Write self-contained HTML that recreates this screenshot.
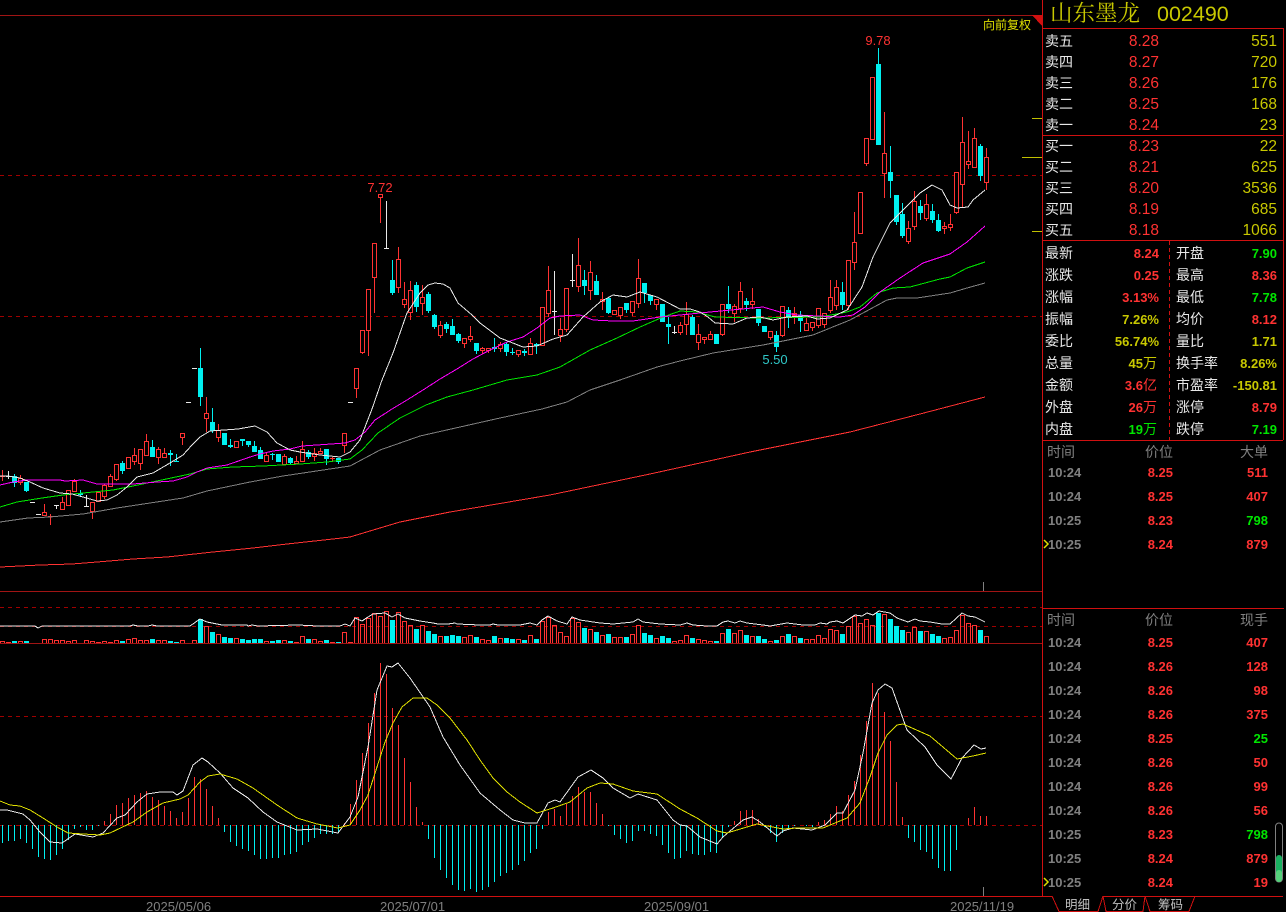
<!DOCTYPE html>
<html lang="zh">
<head>
<meta charset="utf-8">
<title>山东墨龙 002490</title>
<style>
html,body{margin:0;padding:0;background:#000;width:1286px;height:912px;overflow:hidden}
svg{display:block;position:absolute;left:0;top:0}
.d{font-family:"Liberation Sans",Arial,sans-serif}
.c{font-family:"Liberation Sans","WenQuanYi Zen Hei","Noto Sans CJK SC",sans-serif;font-size:14px}
.b{font-family:"Liberation Sans","WenQuanYi Zen Hei","Noto Sans CJK SC",sans-serif;font-size:13px;font-weight:bold}
.n{font-family:"Liberation Sans",Arial,sans-serif;font-size:15.5px}
.e{text-anchor:end}
.w{fill:#e8e8e8}.g{fill:#808080}.r{fill:#ff3232}.y{fill:#c8c800}.l{fill:#00e600}
.big{font-size:14px;font-weight:normal}
</style>
</head>
<body>
<svg width="1286" height="912" viewBox="0 0 1286 912" xmlns="http://www.w3.org/2000/svg">
<g shape-rendering="crispEdges" fill="none" stroke-width="1">
<path stroke="#a01414" d="M0 15.5H1042M0 591.5H1042M0 643.5H1042"/>
<path stroke="#a00000" stroke-dasharray="4 4" d="M0 175.5H1042M0 316.5H1042M0 607.5H1042M0 626.5H1042M0 716.5H1042M0 825.5H1042"/>
<path stroke="#c0c000" d="M1032 118.5H1042M1022 157.5H1042M1032 231.5H1042"/>
<path stroke="#808080" d="M983.5 582V591M983.5 887V896"/>

<!-- red wicks -->
<path stroke="#ff3232" d="M2.5 470V481M0 476.5H5M50.5 514V525M48 516.5H53M332.5 457V462M330 458.5H335M20.5 475V485M44.5 504V515M62.5 497V509M68.5 490V506M74.5 479V491M92.5 502V519M98.5 492V501M104.5 484V499M110.5 474V486M116.5 464V481M128.5 457V468M134.5 448V465M140.5 449V470M146.5 434V455M158.5 447V464M164.5 448V457M182.5 433V445M206.5 397V432M218.5 424V442M236.5 441V447M266.5 453V461M284.5 454V464M296.5 456V463M302.5 441V461M314.5 448V461M320.5 448V453M344.5 433V453M356.5 368V398M362.5 330V354M368.5 289V356M374.5 243V313M380.5 194V223M398.5 247V293M404.5 282V308M410.5 281V320M422.5 285V315M440.5 321V338M464.5 338V348M470.5 326V342M482.5 347V354M488.5 348V353M500.5 342V352M518.5 350V357M530.5 338V354M542.5 307V345M548.5 266V317M560.5 318V342M566.5 288V332M578.5 238V292M590.5 261V300M602.5 292V310M614.5 310V314M620.5 307V319M632.5 301V316M638.5 259V308M656.5 299V310M680.5 322V335M686.5 302V335M698.5 324V350M704.5 337V344M710.5 331V340M722.5 304V336M734.5 304V322M740.5 282V313M752.5 288V309M770.5 331V340M782.5 306V337M794.5 307V324M806.5 318V330M812.5 322V331M818.5 308V328M824.5 313V328M830.5 280V313M836.5 280V310M848.5 260V310M854.5 212V270M860.5 192V234M866.5 138V166M872.5 77V139M884.5 112V198M908.5 221V244M914.5 191V230M926.5 194V221M944.5 222V234M950.5 214V231M956.5 172V214M962.5 117V208M968.5 131V169M974.5 128V167M986.5 148V190"/>
<!-- red bodies -->
<path stroke="#ff3232" fill="#000" d="M18.5 478.5h4v4h-4zM42.5 512.5h4v3h-4zM60.5 502.5h4v7h-4zM66.5 490.5h4v15h-4zM72.5 481.5h4v10h-4zM90.5 502.5h4v9h-4zM96.5 492.5h4v9h-4zM102.5 485.5h4v11h-4zM108.5 476.5h4v10h-4zM114.5 464.5h4v15h-4zM126.5 457.5h4v11h-4zM132.5 455.5h4v6h-4zM138.5 449.5h4v14h-4zM144.5 441.5h4v14h-4zM156.5 449.5h4v8h-4zM162.5 453.5h4v4h-4zM180.5 433.5h4v4h-4zM204.5 413.5h4v5h-4zM216.5 430.5h4v7h-4zM234.5 441.5h4v6h-4zM264.5 455.5h4v6h-4zM282.5 456.5h4v8h-4zM294.5 461.5h4v2h-4zM300.5 449.5h4v12h-4zM312.5 453.5h4v3h-4zM318.5 451.5h4v2h-4zM342.5 433.5h4v12h-4zM354.5 368.5h4v20h-4zM360.5 330.5h4v22h-4zM366.5 289.5h4v41h-4zM372.5 243.5h4v34h-4zM378.5 194.5h4v3h-4zM396.5 259.5h4v28h-4zM402.5 299.5h4v5h-4zM408.5 290.5h4v22h-4zM420.5 297.5h4v6h-4zM438.5 325.5h4v10h-4zM462.5 338.5h4v5h-4zM468.5 336.5h4v3h-4zM480.5 348.5h4v2h-4zM486.5 348.5h4v2h-4zM498.5 344.5h4v4h-4zM516.5 350.5h4v4h-4zM528.5 343.5h4v11h-4zM540.5 307.5h4v38h-4zM546.5 290.5h4v23h-4zM558.5 329.5h4v6h-4zM564.5 288.5h4v41h-4zM576.5 265.5h4v21h-4zM588.5 272.5h4v18h-4zM600.5 299.5h4v2h-4zM612.5 310.5h4v4h-4zM618.5 307.5h4v8h-4zM630.5 301.5h4v11h-4zM636.5 278.5h4v25h-4zM654.5 299.5h4v5h-4zM678.5 325.5h4v7h-4zM684.5 314.5h4v10h-4zM696.5 334.5h4v8h-4zM702.5 337.5h4v2h-4zM708.5 334.5h4v5h-4zM720.5 304.5h4v30h-4zM732.5 306.5h4v7h-4zM738.5 291.5h4v17h-4zM750.5 301.5h4v3h-4zM768.5 331.5h4v6h-4zM780.5 306.5h4v29h-4zM792.5 313.5h4v2h-4zM804.5 323.5h4v7h-4zM810.5 322.5h4v5h-4zM816.5 308.5h4v17h-4zM822.5 313.5h4v11h-4zM828.5 297.5h4v13h-4zM834.5 287.5h4v18h-4zM846.5 260.5h4v45h-4zM852.5 242.5h4v20h-4zM858.5 192.5h4v41h-4zM864.5 138.5h4v25h-4zM870.5 77.5h4v62h-4zM882.5 153.5h4v20h-4zM906.5 228.5h4v13h-4zM912.5 201.5h4v25h-4zM924.5 204.5h4v14h-4zM942.5 226.5h4v2h-4zM948.5 224.5h4v3h-4zM954.5 172.5h4v40h-4zM960.5 142.5h4v42h-4zM966.5 161.5h4v3h-4zM972.5 138.5h4v29h-4zM984.5 157.5h4v25h-4z"/>
<!-- cyan wicks -->
<path stroke="#00f0f0" d="M14.5 474V487M26.5 482V492M80.5 490V496M122.5 461V474M152.5 440V457M170.5 450V466M176.5 454V462M200.5 348V406M212.5 408V433M224.5 433V445M230.5 439V448M242.5 439V446M248.5 441V447M254.5 441V452M260.5 447V459M272.5 453V460M278.5 454V462M290.5 457V464M308.5 450V459M326.5 449V465M338.5 458V464M392.5 260V295M416.5 282V312M428.5 292V313M434.5 314V329M446.5 322V333M452.5 319V335M458.5 333V343M476.5 343V354M494.5 338V352M506.5 342V356M512.5 348V355M524.5 349V356M536.5 343V354M584.5 270V295M596.5 275V295M608.5 298V314M626.5 303V313M644.5 283V303M650.5 295V305M662.5 304V322M668.5 317V344M692.5 315V335M716.5 334V344M728.5 286V313M746.5 298V311M758.5 309V326M764.5 326V332M776.5 331V352M788.5 307V328M800.5 311V332M842.5 282V310M878.5 48V145M890.5 146V198M896.5 195V225M902.5 203V238M920.5 200V220M932.5 204V223M938.5 214V232M980.5 144V181"/>
<!-- cyan bodies -->
<path stroke="none" fill="#00f0f0" d="M12 476h5v7h-5zM24 482h5v9h-5zM78 493h5v2h-5zM120 463h5v8h-5zM150 447h5v10h-5zM168 453h5v2h-5zM174 461h5v1h-5zM198 368h5v29h-5zM210 422h5v9h-5zM222 433h5v12h-5zM228 445h5v2h-5zM240 439h5v2h-5zM246 441h5v4h-5zM252 446h5v6h-5zM258 450h5v9h-5zM270 454h5v1h-5zM276 454h5v8h-5zM288 458h5v5h-5zM306 452h5v5h-5zM324 449h5v10h-5zM336 458h5v4h-5zM390 280h5v13h-5zM414 285h5v22h-5zM426 294h5v17h-5zM432 315h5v12h-5zM444 324h5v5h-5zM450 326h5v9h-5zM456 334h5v7h-5zM474 343h5v8h-5zM492 347h5v2h-5zM504 344h5v8h-5zM510 352h5v1h-5zM522 351h5v2h-5zM534 344h5v2h-5zM582 280h5v6h-5zM594 281h5v14h-5zM606 298h5v15h-5zM624 303h5v7h-5zM642 283h5v10h-5zM648 295h5v6h-5zM660 304h5v18h-5zM666 324h5v3h-5zM690 317h5v18h-5zM714 334h5v10h-5zM726 304h5v5h-5zM744 301h5v4h-5zM756 309h5v14h-5zM762 326h5v6h-5zM774 335h5v12h-5zM786 310h5v7h-5zM798 315h5v6h-5zM840 292h5v13h-5zM876 64h5v81h-5zM888 172h5v9h-5zM894 195h5v27h-5zM900 214h5v22h-5zM918 206h5v7h-5zM930 211h5v9h-5zM936 220h5v11h-5zM978 146h5v30h-5z"/>
<!-- white doji -->
<path stroke="#e8e8e8" d="M8.5 471V479M6 476.5H11M30 502.5H35M36 514.5H41M54 505.5H59M56.5 505V509M84 506.5H89M86.5 495V507M186 402.5H191M192 368.5H197M348 402.5H353M384 248.5H389M386.5 201V248M552 311.5H557M554.5 271V335M570 280.5H575M572.5 254V287M672 332.5H677M674.5 326V334"/>

<!-- moving averages -->
<polyline stroke="#ff3232" points="0,567 40,565 72,564 97,562 133,559 167,557 213,552 253,548 287,544 333,539 350,537 400,522 450,512 550,495 650,474 750,452 850,432 920,414 985,397"/>
<polyline stroke="#808080" points="0,522 28,518 50,517 83,514 117,508 150,503 183,498 207,491 250,482 283,476 350,466 380,450 420,436 500,418 542,409 567,402 590,390 620,380 657,367 680,361 713,353 763,345 813,335 850,320 863,313 887,300 897,298 917,298 950,293 967,288 985,283"/>
<polyline stroke="#00e600" points="0,507 17,502 42,498 63,495 93,492 113,490 133,486 157,481 190,474 207,469 233,467 263,466 300,464 327,462 350,459 362,450 378,433 400,418 426,405 447,397 473,390 507,380 537,375 560,367 590,350 617,338 640,327 663,317 680,311 697,312 715,317 757,318 820,317 847,312 860,307 877,293 893,288 910,287 940,279 950,277 967,268 985,262"/>
<polyline stroke="#ff00ff" points="0,485 13,482 27,480 60,480 65,481 83,480 97,484 133,484 157,482 173,481 187,477 197,472 207,468 227,465 250,457 260,454 273,451 290,449 302,446 317,445 345,443 355,440 365,432 375,420 392,409 407,400 423,390 440,379 457,369 473,359 490,350 507,342 523,337 537,328 550,318 560,316 580,315 593,320 613,321 633,321 660,317 680,315 710,312 763,307 780,312 797,315 840,317 853,315 865,307 880,292 900,278 923,263 950,254 967,242 985,226"/>
<polyline stroke="#e8e8e8" points="0,476 8,476 20,478 30,482 43,488 60,493 72,494 83,497 97,501 107,500 117,495 127,487 137,477 153,473 170,463 183,455 192,445 200,437 210,431 238,429 255,426 267,432 277,443 290,450 300,452 320,455 340,457 350,452 360,440 372,409 382,380 393,353 407,313 420,293 428,285 435,283 443,284 450,288 458,303 472,315 480,323 500,338 523,347 537,346 553,339 567,335 583,317 600,302 613,295 627,297 640,292 657,297 680,309 690,309 700,312 708,317 715,323 733,324 747,318 760,317 773,320 787,317 807,316 817,319 830,318 847,310 862,287 873,257 890,223 910,203 920,193 932,185 942,190 950,205 957,208 968,207 973,200 985,190"/>

<!-- volume -->
<path stroke="#ff3232" d="M0.5 643V641.5h4V643M6.5 643V642.5h4V643M18.5 643V641.5h4V643M42.5 643V639.5h4V643M48.5 643V639.5h4V643M54.5 643V640.5h4V643M60.5 643V640.5h4V643M66.5 643V641.5h4V643M72.5 643V640.5h4V643M84.5 643V640.5h4V643M90.5 643V641.5h4V643M96.5 643V642.5h4V643M102.5 643V641.5h4V643M108.5 643V642.5h4V643M114.5 643V640.5h4V643M126.5 643V639.5h4V643M132.5 643V638.5h4V643M138.5 643V640.5h4V643M144.5 643V640.5h4V643M156.5 643V640.5h4V643M162.5 643V640.5h4V643M180.5 643V640.5h4V643M192.5 643V640.5h4V643M204.5 643V626.5h4V643M216.5 643V634.5h4V643M234.5 643V638.5h4V643M264.5 643V641.5h4V643M282.5 643V640.5h4V643M294.5 643V642.5h4V643M300.5 643V636.5h4V643M312.5 643V639.5h4V643M318.5 643V641.5h4V643M330.5 643V642.5h4V643M342.5 643V632.5h4V643M348.5 643V642.5h4V643M354.5 643V617.5h4V643M360.5 643V624.5h4V643M366.5 643V618.5h4V643M372.5 643V613.5h4V643M378.5 643V616.5h4V643M384.5 643V611.5h4V643M396.5 643V612.5h4V643M402.5 643V621.5h4V643M408.5 643V625.5h4V643M420.5 643V625.5h4V643M438.5 643V636.5h4V643M462.5 643V637.5h4V643M468.5 643V635.5h4V643M480.5 643V639.5h4V643M486.5 643V640.5h4V643M498.5 643V638.5h4V643M516.5 643V639.5h4V643M528.5 643V635.5h4V643M540.5 643V621.5h4V643M546.5 643V617.5h4V643M552.5 643V625.5h4V643M558.5 643V632.5h4V643M564.5 643V636.5h4V643M570.5 643V618.5h4V643M576.5 643V622.5h4V643M588.5 643V629.5h4V643M600.5 643V635.5h4V643M612.5 643V637.5h4V643M618.5 643V637.5h4V643M630.5 643V634.5h4V643M636.5 643V625.5h4V643M654.5 643V638.5h4V643M672.5 643V641.5h4V643M678.5 643V640.5h4V643M684.5 643V635.5h4V643M696.5 643V639.5h4V643M702.5 643V640.5h4V643M708.5 643V641.5h4V643M720.5 643V633.5h4V643M732.5 643V633.5h4V643M738.5 643V630.5h4V643M750.5 643V636.5h4V643M768.5 643V641.5h4V643M780.5 643V636.5h4V643M792.5 643V636.5h4V643M804.5 643V639.5h4V643M810.5 643V639.5h4V643M816.5 643V635.5h4V643M822.5 643V638.5h4V643M828.5 643V629.5h4V643M834.5 643V630.5h4V643M846.5 643V626.5h4V643M852.5 643V616.5h4V643M858.5 643V623.5h4V643M864.5 643V619.5h4V643M870.5 643V625.5h4V643M882.5 643V614.5h4V643M906.5 643V632.5h4V643M912.5 643V627.5h4V643M924.5 643V631.5h4V643M942.5 643V638.5h4V643M948.5 643V637.5h4V643M954.5 643V630.5h4V643M960.5 643V615.5h4V643M966.5 643V623.5h4V643M972.5 643V625.5h4V643M984.5 643V636.5h4V643"/>
<path stroke="none" fill="#00f0f0" d="M12 641h5v2h-5zM24 641h5v2h-5zM120 641h5v2h-5zM150 639h5v4h-5zM168 641h5v2h-5zM174 642h5v1h-5zM198 619h5v24h-5zM210 632h5v11h-5zM222 637h5v6h-5zM228 638h5v5h-5zM240 639h5v4h-5zM246 640h5v3h-5zM252 639h5v4h-5zM258 639h5v4h-5zM270 641h5v2h-5zM276 640h5v3h-5zM288 641h5v2h-5zM306 639h5v4h-5zM324 640h5v3h-5zM336 642h5v1h-5zM390 620h5v23h-5zM414 629h5v14h-5zM426 631h5v12h-5zM432 634h5v9h-5zM444 636h5v7h-5zM450 635h5v8h-5zM456 636h5v7h-5zM474 637h5v6h-5zM492 636h5v7h-5zM504 638h5v5h-5zM510 639h5v4h-5zM522 640h5v3h-5zM534 639h5v4h-5zM582 628h5v15h-5zM594 632h5v11h-5zM606 634h5v9h-5zM624 637h5v6h-5zM642 633h5v10h-5zM648 635h5v8h-5zM660 636h5v7h-5zM666 638h5v5h-5zM690 638h5v5h-5zM714 641h5v2h-5zM726 629h5v14h-5zM744 635h5v8h-5zM756 636h5v7h-5zM762 639h5v4h-5zM774 640h5v3h-5zM786 634h5v9h-5zM798 638h5v5h-5zM840 634h5v9h-5zM876 613h5v30h-5zM888 619h5v24h-5zM894 626h5v17h-5zM900 630h5v13h-5zM918 631h5v12h-5zM930 634h5v9h-5zM936 636h5v7h-5zM978 630h5v13h-5z"/>
<polyline stroke="#e8e8e8" points="0,626 35,626 38,628 42,626 130,626 133,625 138,626 148,626 152,625 157,626 190,626 200,619 207,622 217,624 222,625 247,625 248,626 252,625 258,626 298,625 318,626 340,626 345,624 350,626 355,618 362,621 368,617 373,614 385,613 392,617 398,614 405,618 420,621 433,623 438,624 448,624 455,623 457,624 480,625 490,625 493,624 498,625 520,625 530,623 537,625 542,620 548,616 557,621 567,624 572,617 580,620 600,623 613,624 633,622 638,619 643,622 660,624 680,625 687,623 693,625 707,626 717,626 723,622 728,621 735,623 740,621 747,623 763,625 770,626 787,623 803,625 815,625 820,623 827,624 830,622 837,621 843,623 855,615 862,616 867,613 873,615 879,611 890,613 897,618 908,622 915,619 920,621 930,622 942,624 950,624 962,613 968,616 975,617 985,622"/>

<!-- MACD bars -->
<path stroke="#00f0f0" d="M2.5 825V843M8.5 825V841M14.5 825V841M20.5 825V839M26.5 825V843M32.5 825V849M38.5 825V857M44.5 825V859M50.5 825V860M56.5 825V855M62.5 825V849M68.5 825V840M74.5 825V829M80.5 825V827M86.5 825V830M92.5 825V830M98.5 825V826M224.5 825V832M230.5 825V842M236.5 825V846M242.5 825V849M248.5 825V851M254.5 825V855M260.5 825V859M266.5 825V859M272.5 825V858M278.5 825V858M284.5 825V855M290.5 825V854M296.5 825V852M302.5 825V845M308.5 825V842M314.5 825V838M320.5 825V834M326.5 825V834M332.5 825V834M338.5 825V833M428.5 825V839M434.5 825V858M440.5 825V870M446.5 825V878M452.5 825V885M458.5 825V890M464.5 825V891M470.5 825V889M476.5 825V892M482.5 825V890M488.5 825V887M494.5 825V882M500.5 825V876M506.5 825V873M512.5 825V870M518.5 825V865M524.5 825V861M530.5 825V853M536.5 825V849M542.5 825V829M608.5 825V826M614.5 825V835M620.5 825V839M626.5 825V843M632.5 825V841M638.5 825V831M644.5 825V831M650.5 825V834M656.5 825V836M662.5 825V845M668.5 825V853M674.5 825V859M680.5 825V858M686.5 825V851M692.5 825V854M698.5 825V855M704.5 825V855M710.5 825V852M716.5 825V853M722.5 825V837M728.5 825V827M764.5 825V827M770.5 825V833M776.5 825V842M782.5 825V833M788.5 825V828M794.5 825V826M806.5 825V826M812.5 825V827M908.5 825V838M914.5 825V842M920.5 825V850M926.5 825V852M932.5 825V859M938.5 825V868M944.5 825V871M950.5 825V871M956.5 825V850"/>
<path stroke="#ff3232" d="M104.5 825V821M110.5 825V814M116.5 825V805M122.5 825V803M128.5 825V798M134.5 825V795M140.5 825V793M146.5 825V791M152.5 825V797M158.5 825V800M164.5 825V806M170.5 825V811M176.5 825V818M182.5 825V812M188.5 825V798M194.5 825V777M200.5 825V779M206.5 825V789M212.5 825V806M218.5 825V818M344.5 825V823M350.5 825V804M356.5 825V780M362.5 825V753M368.5 825V723M374.5 825V693M380.5 825V663M386.5 825V674M392.5 825V708M398.5 825V725M404.5 825V758M410.5 825V782M416.5 825V807M422.5 825V822M548.5 825V812M554.5 825V809M560.5 825V816M566.5 825V804M572.5 825V796M578.5 825V787M584.5 825V792M590.5 825V792M596.5 825V803M602.5 825V814M734.5 825V821M740.5 825V811M746.5 825V810M752.5 825V810M758.5 825V819M818.5 825V822M824.5 825V820M830.5 825V814M836.5 825V806M842.5 825V811M848.5 825V795M854.5 825V781M860.5 825V755M866.5 825V721M872.5 825V683M878.5 825V693M884.5 825V712M890.5 825V741M896.5 825V782M902.5 825V817M968.5 825V818M974.5 825V807M980.5 825V816M986.5 825V816"/>
<polyline stroke="#e8e8e8" points="0,810 7,810 23,814 30,820 40,832 50,842 62,843 75,834 93,837 103,833 117,818 125,815 137,802 147,794 160,792 173,792 177,795 183,791 193,765 202,758 208,762 220,773 233,788 248,798 263,812 277,822 297,830 317,829 338,833 350,817 358,797 368,747 377,690 387,666 392,667 398,663 410,678 430,707 443,737 460,765 480,793 500,810 513,820 525,823 537,823 548,803 555,800 560,802 578,777 591,770 603,778 613,788 630,798 638,794 657,800 673,820 680,825 687,826 700,837 717,844 723,837 743,820 752,817 760,822 777,836 783,831 793,828 812,830 825,825 837,813 843,813 855,790 863,753 872,703 878,690 885,684 892,688 907,730 925,747 937,765 951,779 962,758 974,745 981,749 986,748"/>
<polyline stroke="#e0e000" points="0,801 10,805 20,806 30,810 43,818 57,827 68,833 83,834 100,835 110,833 133,822 147,812 163,803 180,799 188,795 200,782 208,776 220,774 237,779 253,788 277,805 297,818 317,824 338,828 350,825 360,810 368,795 377,767 385,742 393,723 402,707 413,698 427,698 437,705 450,718 467,740 480,760 493,778 507,792 520,802 537,813 553,808 570,802 587,788 600,783 613,784 633,791 657,794 680,809 697,818 717,831 727,833 757,824 783,829 797,828 823,828 847,818 860,803 870,777 878,753 887,735 897,725 903,724 930,736 957,759 973,756 986,753"/>

<!-- panel frames -->
<path stroke="#d01010" d="M1042.5 0V896M0 896.5H1052M1103 896.5H1283M1042 28.5H1283M1042 135.5H1283M1042 240.5H1283M1042 440.5H1283M1042 608.5H1284M1283.5 28V440"/>
<path stroke="#d01010" stroke-dasharray="4 3" d="M1169.5 241V440"/>
<path stroke="#d01010" d="M1052 896L1059 911.5H1098L1103 896M1103 896L1106 911.5H1143L1145 896M1145 896L1150 911.5H1189L1195 896"/>
<path fill="#d01010" stroke="none" d="M1032 15H1042V26z"/>
</g>

<!-- scrollbar -->
<rect x="1275.5" y="823" width="7" height="59" rx="3.5" fill="#000" stroke="#808080"/>
<rect x="1276" y="855" width="6" height="27" rx="3" fill="#19b060"/>
<rect x="1276" y="870" width="6" height="12" rx="3" fill="#55d07a"/>

<!-- chart labels -->
<text class="d r" x="380" y="192" font-size="13" text-anchor="middle">7.72</text>
<text class="d r" x="878" y="45" font-size="13" text-anchor="middle">9.78</text>
<text class="d" x="775" y="364" font-size="13" text-anchor="middle" fill="#30c8c8">5.50</text>
<text class="c" x="983" y="29" style="font-size:12px" fill="#e0e000">向前复权</text>
<text class="d g" x="146" y="911" font-size="13">2025/05/06</text>
<text class="d g" x="380" y="911" font-size="13">2025/07/01</text>
<text class="d g" x="644" y="911" font-size="13">2025/09/01</text>
<text class="d g" x="950" y="911" font-size="13">2025/11/19</text>

<!-- title -->
<text x="1050" y="21" font-family="'Noto Serif CJK SC','Liberation Serif',serif" font-size="22.5" fill="#c8c800">山东墨龙</text>
<text class="d" x="1157" y="21" font-size="21.5" fill="#c8c800">002490</text>

<!-- order book -->
<g class="c w">
<text x="1045" y="46">卖五</text><text x="1045" y="67">卖四</text><text x="1045" y="88">卖三</text><text x="1045" y="109">卖二</text><text x="1045" y="130">卖一</text>
<text x="1045" y="151">买一</text><text x="1045" y="172">买二</text><text x="1045" y="193">买三</text><text x="1045" y="214">买四</text><text x="1045" y="235">买五</text>
</g>
<g class="n r e">
<text x="1159" y="46">8.28</text><text x="1159" y="67">8.27</text><text x="1159" y="88">8.26</text><text x="1159" y="109">8.25</text><text x="1159" y="130">8.24</text>
<text x="1159" y="151">8.23</text><text x="1159" y="172">8.21</text><text x="1159" y="193">8.20</text><text x="1159" y="214">8.19</text><text x="1159" y="235">8.18</text>
</g>
<g class="n y e">
<text x="1277" y="46">551</text><text x="1277" y="67">720</text><text x="1277" y="88">176</text><text x="1277" y="109">168</text><text x="1277" y="130">23</text>
<text x="1277" y="151">22</text><text x="1277" y="172">625</text><text x="1277" y="193">3536</text><text x="1277" y="214">685</text><text x="1277" y="235">1066</text>
</g>

<!-- stats -->
<g class="c w">
<text x="1045" y="258">最新</text><text x="1045" y="280">涨跌</text><text x="1045" y="302">涨幅</text><text x="1045" y="324">振幅</text><text x="1045" y="346">委比</text><text x="1045" y="368">总量</text><text x="1045" y="390">金额</text><text x="1045" y="412">外盘</text><text x="1045" y="434">内盘</text>
<text x="1176" y="258">开盘</text><text x="1176" y="280">最高</text><text x="1176" y="302">最低</text><text x="1176" y="324">均价</text><text x="1176" y="346">量比</text><text x="1176" y="368">换手率</text><text x="1176" y="390">市盈率</text><text x="1176" y="412">涨停</text><text x="1176" y="434">跌停</text>
</g>
<g class="b e">
<text class="r" x="1159" y="258">8.24</text>
<text class="r" x="1159" y="280">0.25</text>
<text class="r" x="1159" y="302">3.13%</text>
<text class="y" x="1159" y="324">7.26%</text>
<text class="y" x="1159" y="346">56.74%</text>
<text class="y" x="1157" y="368">45<tspan class="big">万</tspan></text>
<text class="r" x="1157" y="390">3.6<tspan class="big">亿</tspan></text>
<text class="r" x="1157" y="412">26<tspan class="big">万</tspan></text>
<text class="l" x="1157" y="434">19<tspan class="big">万</tspan></text>
<text class="l" x="1277" y="258">7.90</text>
<text class="r" x="1277" y="280">8.36</text>
<text class="l" x="1277" y="302">7.78</text>
<text class="r" x="1277" y="324">8.12</text>
<text class="y" x="1277" y="346">1.71</text>
<text class="y" x="1277" y="368">8.26%</text>
<text class="y" x="1277" y="390">-150.81</text>
<text class="r" x="1277" y="412">8.79</text>
<text class="l" x="1277" y="434">7.19</text>
</g>

<!-- big orders -->
<g class="c g">
<text x="1047" y="457">时间</text><text x="1145" y="457">价位</text><text x="1240" y="457">大单</text>
<text x="1047" y="625">时间</text><text x="1145" y="625">价位</text><text x="1240" y="625">现手</text>
</g>
<g class="b g">
<text x="1048" y="477">10:24</text><text x="1048" y="501">10:24</text><text x="1048" y="525">10:25</text><text x="1048" y="549">10:25</text>
<text x="1048" y="647">10:24</text><text x="1048" y="671">10:24</text><text x="1048" y="695">10:24</text><text x="1048" y="719">10:24</text><text x="1048" y="743">10:24</text><text x="1048" y="767">10:24</text><text x="1048" y="791">10:24</text><text x="1048" y="815">10:24</text><text x="1048" y="839">10:25</text><text x="1048" y="863">10:25</text><text x="1048" y="887">10:25</text>
</g>
<g class="b r e">
<text x="1173" y="477">8.25</text><text x="1173" y="501">8.25</text><text x="1173" y="525">8.23</text><text x="1173" y="549">8.24</text>
<text x="1173" y="647">8.25</text><text x="1173" y="671">8.26</text><text x="1173" y="695">8.26</text><text x="1173" y="719">8.26</text><text x="1173" y="743">8.25</text><text x="1173" y="767">8.26</text><text x="1173" y="791">8.26</text><text x="1173" y="815">8.26</text><text x="1173" y="839">8.23</text><text x="1173" y="863">8.24</text><text x="1173" y="887">8.24</text>
</g>
<g class="b r e">
<text x="1268" y="477">511</text><text x="1268" y="501">407</text><text class="l" x="1268" y="525">798</text><text x="1268" y="549">879</text>
<text x="1268" y="647">407</text><text x="1268" y="671">128</text><text x="1268" y="695">98</text><text x="1268" y="719">375</text><text class="l" x="1268" y="743">25</text><text x="1268" y="767">50</text><text x="1268" y="791">99</text><text x="1268" y="815">56</text><text class="l" x="1268" y="839">798</text><text x="1268" y="863">879</text><text x="1268" y="887">19</text>
</g>
<path d="M1044 540L1048 544L1044 548M1044 878L1048 882L1044 886" fill="none" stroke="#e0e000" stroke-width="1.5"/>

<!-- tabs -->
<g class="c" fill="#c0c0c0" style="font-size:12.5px">
<text x="1065" y="909">明细</text><text x="1112" y="909">分价</text><text x="1158" y="909">筹码</text>
</g>
</svg>
</body>
</html>
